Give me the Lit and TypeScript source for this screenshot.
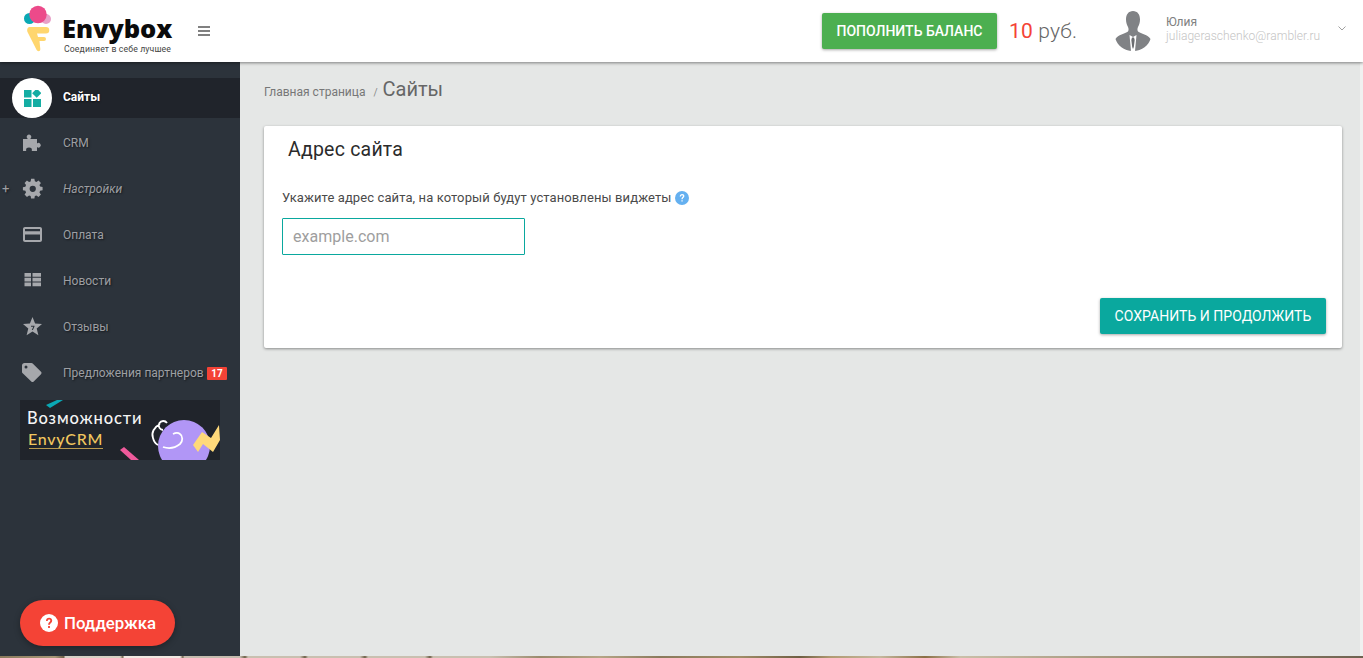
import { LitElement, html, css, svg } from "lit";
import { customElement } from "lit/decorators.js";

const icons: Record<string, unknown> = {
  crm: svg`<path d="M0 6h4.500v-.4a2.300 2.300 0 1 1 3 0V6H14v4.500a2.300 2.300 0 1 1 0 3.500v4H8.800c.5-2.500-.5-3.500-2.800-3.500S2.700 15.500 3.200 18H0z"/>`,
  gear: svg`<g transform="translate(-.1 .6) scale(.92)"><path fill-rule="evenodd" d="M8.200 0h3.600l.5 2.700 1.700.7 2.300-1.600 2.600 2.600-1.600 2.300.7 1.700 2.700.5v3.600l-2.700.5-.7 1.700 1.600 2.300-2.600 2.600-2.300-1.600-1.700.7-.5 2.600H8.200l-.5-2.600-1.700-.7-2.300 1.600-2.600-2.600 1.600-2.300-.7-1.700-2.700-.5V9l2.700-.5.7-1.700-1.600-2.300 2.600-2.600L6 3.500l1.700-.7zM10 7.400a3.400 3.400 0 1 0 0 6.800 3.400 3.400 0 0 0 0-6.800z" transform="translate(.7 -.8)"/></g>`,
  card: svg`<path fill-rule="evenodd" d="M2 2h15c1.100 0 2 .9 2 2v11c0 1.100-.9 2-2 2H2c-1.100 0-2-.9-2-2V4c0-1.100.9-2 2-2zm0 2v2.300h15V4zm0 5.500V15h15V9.500z"/>`,
  table: svg`<path d="M1.500 2H8v3.700H1.500zM9.500 2H18v3.700H9.500zM1.500 6.800H8v3.700H1.500zM9.500 6.800H18v3.700H9.500zM1.500 11.600H8v3.700H1.500zM9.500 11.600H18v3.700H9.500z"/>`,
  star: svg`<path fill-rule="evenodd" d="M9.500 0l2.600 6.500 6.900.5-5.300 4.400 1.700 6.800-5.900-3.700-5.900 3.700 1.700-6.800L0 7l6.900-.5zM8 8.700v1h2.300L8.800 13h1.100l1.600-3.600v-.7z"/>`,
  tag: svg`<path fill-rule="evenodd" d="M1.500 0h7c.5 0 .9.200 1.200.5l8.300 8.300c.7.700.7 1.700 0 2.400l-7.300 7.300c-.7.700-1.700.7-2.400 0L-.3 10.200c-.4-.4-.7-.8-.7-1.300V2.500C-1 1.100.1 0 1.500 0zM3 2.500a1.500 1.500 0 1 0 0 3 1.500 1.500 0 0 0 0-3z"/>`,
};

const menu = [
  { label: "CRM", icon: "crm" },
  { label: "Настройки", icon: "gear", italic: true, plus: true },
  { label: "Оплата", icon: "card" },
  { label: "Новости", icon: "table" },
  { label: "Отзывы", icon: "star" },
  { label: "Предложения партнеров", icon: "tag", badge: "17" },
];

@customElement("app-root")
export class AppRoot extends LitElement {
  static styles = css`
    :host { display: block; width: 1363px; height: 658px; overflow: hidden; font-family: Roboto, "Liberation Sans", sans-serif; background: #e5e7e6; position: relative; }
    * { box-sizing: border-box; }
    .header { height: 62px; background: #fff; display: flex; align-items: center; box-shadow: 0 1px 3px rgba(0,0,0,.45); position: relative; z-index: 2; }
    .brand { width: 240px; height: 100%; display: flex; align-items: center; flex: none; }
    .cone { width: 30px; height: 48px; margin: 0 0 0 23px; align-self: flex-start; margin-top: 5px; flex: none; display: block; }
    .wordmark { margin-left: 9px; display: flex; flex-direction: column; width: 113px; padding-top: 8px; }
    .word { font: 800 25.500px/22px "Open Sans", Lato, sans-serif; color: #0b0b0b; letter-spacing: -.1px; }
    .sub { font: 400 8.700px/10px Roboto, sans-serif; color: #444; letter-spacing: .13px; margin: 5px 0 0 2px; white-space: nowrap; }
    .burger { width: 12px; height: 10px; margin-left: 23px; border-top: 2px solid #808080; border-bottom: 2px solid #808080; position: relative; flex: none; }
    .burger::after { content: ""; position: absolute; left: 0; right: 0; top: 2px; height: 2px; background: #808080; }
    .right { margin-left: auto; display: flex; align-items: center; height: 100%; }
    .topup { width: 175px; height: 36px; background: #4caf50; color: #fff; font-size: 14px; font-weight: 500; border-radius: 2px; display: flex; align-items: center; justify-content: center; box-shadow: 0 1px 3px rgba(0,0,0,.35); }
    .balance { margin-left: 12px; width: 106px; font-size: 21px; font-weight: 300; color: #666; white-space: nowrap; letter-spacing: .2px; }
    .balance b { font-weight: 400; color: #f44336; }
    .avatar { width: 36px; height: 40px; flex: none; display: block; }
    .user { margin-left: 15px; width: 172px; display: flex; flex-direction: column; font-size: 12px; line-height: 14px; margin-top: -4px; }
    .user .name { color: #808080; }
    .user .mail { color: #c4c4c4; font-weight: 300; letter-spacing: .05px; }
    .chev { width: 8px; height: 6px; margin: -6px 17px 0 0; flex: none; display: block; }

    .body { display: flex; height: 594px; }
    .side { width: 240px; flex: none; background: #2c333b; display: flex; flex-direction: column; padding-top: 16px; position: relative; }
    .active { height: 40px; background: #20242b; display: flex; align-items: center; position: relative; }
    .circle { width: 40px; height: 40px; border-radius: 50%; background: #fff; margin-left: 12px; display: flex; align-items: center; justify-content: center; flex: none; }
    .active span { margin: -2px 0 0 11px; color: #fff; font-size: 12px; font-weight: 700; text-shadow: 0 1px 2px rgba(0,0,0,.6); }
    .list { display: flex; flex-direction: column; padding-top: 2px; }
    .item { height: 46px; display: flex; align-items: center; position: relative; padding-left: 23px; color: #9d9fa3; font-size: 12px; text-shadow: 1px 1px 2px rgba(0,0,0,.55); white-space: nowrap; }
    .item svg { width: 20px; height: 20px; fill: #a6a8ac; flex: none; overflow: visible; }
    .item .lbl { margin-left: 20px; }
    .item.it .lbl { font-style: italic; }
    .plus { position: absolute; left: 2px; font-size: 13px; color: #9d9fa3; top: 15px; }
    .badge { background: #f44336; color: #fff; font-size: 10px; font-weight: 700; height: 13px; line-height: 13px; padding: 0 4.500px; margin-left: 3px; border-radius: 1px; text-shadow: none; }
    .promo { width: 200px; height: 60px; margin: 4px 0 0 20px; background: #20242b; position: relative; overflow: hidden; flex: none; }
    .promo .deco { position: absolute; inset: 0; width: 200px; height: 60px; display: block; }
    .promo .t1 { position: absolute; left: 7px; top: 9px; color: #f4f4f4; font: 500 16.500px/19px Lato, Roboto, sans-serif; letter-spacing: .9px; }
    .promo .t2 { position: absolute; left: 8px; top: 29px; color: #f1c75f; font: 500 16px/19px Lato, Roboto, sans-serif; letter-spacing: .75px; }
    .promo .ul { position: absolute; left: 9px; top: 48px; width: 74px; height: 1px; background: #b99a4f; }
    .support { position: absolute; left: 20px; top: 538px; width: 155px; height: 46px; border-radius: 23px; background: #f44336; color: #fff; display: flex; align-items: center; padding: 0 0 1px 20px; font-size: 16.800px; font-weight: 500; box-shadow: 0 2px 6px rgba(0,0,0,.3); }
    .support svg { width: 18px; height: 18px; margin-right: 6px; flex: none; display: block; }

    .main { flex: 1; min-width: 0; padding: 15px 21px 0 24px; }
    .crumbs { display: flex; align-items: baseline; height: 25px; color: #777; white-space: nowrap; }
    .crumbs .c1 { font-size: 12px; }
    .crumbs .sep { font-size: 10px; margin: 0 5px 0 8px; color: #888; }
    .crumbs .c2 { font-size: 20px; color: #666; font-weight: 400; }
    .card { margin-top: 24px; height: 222px; background: #fff; border-radius: 2px; box-shadow: 0 1px 3px rgba(0,0,0,.4); padding: 0 16px 0 18px; display: flex; flex-direction: column; }
    .card h2 { margin: 10px 0 0 6px; font-size: 19.500px; line-height: 27px; font-weight: 400; color: #2b2b2b; letter-spacing: .22px; }
    .field-label { margin-top: 27px; display: flex; align-items: center; font-size: 13px; line-height: 16px; color: #4a4a4a; letter-spacing: .1px; }
    .help { width: 14px; height: 14px; margin-left: 3px; display: block; flex: none; }
    .input { margin-top: 12px; width: 243px; height: 37px; border: 1px solid #0aa89e; border-radius: 1px; padding-left: 10px; display: flex; align-items: center; font-size: 16px; color: #9e9e9e; letter-spacing: .02px; }
    .actions { margin-top: 43px; display: flex; justify-content: flex-end; }
    .save { width: 226px; height: 36px; background: #0aa89e; color: #fff; font-size: 14px; font-weight: 400; letter-spacing: .03px; border-radius: 2px; display: flex; align-items: center; justify-content: center; box-shadow: 0 1px 3px rgba(0,0,0,.35); white-space: nowrap; }
    .stripe { height: 2px; background: linear-gradient(90deg, #8a7a5c 0, #a89878 55px, #6d6048 64px, #d5d0c6 65px, #d8d2c4 120px, #6d6048 123px, #f1e9e2 124px, #f1e9e2 180px, #6d6048 183px, #c5bcae 184px, #c5bcae 240px, #6d6048 245px, #c9c0b0 248px, #c9c0b0 300px, #6d6048 305px, #c9c0b0 308px, #c9c0b0 360px, #6d6048 365px, #c9c0b0 368px, #c9c0b0 425px, #6d6048 430px, #c9c0b0 433px, #c9c0b0 490px, #9a8a6c 540px, #b5a586 600px, #8a7a5c 660px, #a08d68 740px, #6e5e42 800px, #b09a72 830px, #c5b89e 880px, #8a6f45 925px, #cabfa8 960px, #a89a80 1100px, #8c7f66 1250px, #6e6250 1363px); position: relative; z-index: 3; }
    .rail { position: absolute; right: 0; top: 62px; bottom: 2px; width: 3px; background: #f0f1f0; }
  `;

  render() {
    return html`
      <header class="header">
        <div class="brand">
          <svg class="cone" viewBox="0 0 30 48">
            <circle cx="6.500" cy="13.500" r="5.500" fill="#0aa8b4"/>
            <circle cx="23" cy="14" r="5" fill="#e8a0c8"/>
            <circle cx="15" cy="9.500" r="8.700" fill="#ec4a8a"/>
            <path d="M6.500 22H23a3 3 0 0 1 0 6.500H14l1 3.500h6a2 2 0 0 1 0 4h-4.500l.8 8c.2 2.500-2.800 3-3.800.8L4.500 27c-.8-2 0-5 2-5z" fill="#ffd66e"/>
          </svg>
          <div class="wordmark">
            <div class="word">Envybox</div>
            <div class="sub">Соединяет в себе лучшее</div>
          </div>
          <div class="burger"></div>
        </div>
        <div class="right">
          <div class="topup">ПОПОЛНИТЬ БАЛАНС</div>
          <div class="balance"><b>10</b> руб.</div>
          <svg class="avatar" viewBox="0 0 36 40">
            <path d="M18 0c4.500 0 7 3.500 7 8.500 0 3-1 5.500-2 7.500-.7 1.500-.8 3.500 0 4.500 3 2.500 10 3 12.500 7.500-2 6-8 12-17.500 12S2.500 34 .5 28c2.500-4.500 9.500-5 12.500-7.500.8-1 .7-3 0-4.500-1-2-2-4.500-2-7.500C11 3.500 13.500 0 18 0z" fill="#808285"/>
            <path d="M14.500 24l3.500 2 3.500-2-1.500 16h-4z" fill="#fff"/>
            <path d="M17 26.500h2l.7 2.500-.9 7-.8 2-.8-2-.9-7z" fill="#6b6d70"/>
          </svg>
          <div class="user">
            <span class="name">Юлия</span>
            <span class="mail">juliageraschenko@rambler.ru</span>
          </div>
          <svg class="chev" viewBox="0 0 8 6"><path d="M.5 1.500l3.500 3.500 3.500-3.500" fill="none" stroke="#a0a0a0" stroke-width="1"/></svg>
        </div>
      </header>
      <div class="body">
        <aside class="side">
          <div class="active">
            <div class="circle">
              <svg width="17" height="17" viewBox="0 0 17 17" fill="#14ada3">
                <rect x="0" y="0" width="7.500" height="7.500"/>
                <rect x="8.800" y="0" width="6.500" height="6.500" transform="rotate(45 12.500 4)"/>
                <rect x="0" y="9" width="7.500" height="8"/>
                <rect x="9" y="9" width="8" height="8"/>
              </svg>
            </div>
            <span>Сайты</span>
          </div>
          <nav class="list">
            ${menu.map(
              (m) => html`
                <div class="item ${m.italic ? "it" : ""}">
                  ${m.plus ? html`<span class="plus">+</span>` : ""}
                  <svg viewBox="0 0 20 20">${icons[m.icon]}</svg>
                  <span class="lbl">${m.label}</span>
                  ${m.badge ? html`<span class="badge">${m.badge}</span>` : ""}
                </div>
              `
            )}
          </nav>
          <div class="promo">
            <svg class="deco" viewBox="0 0 200 60">
              <path d="M26 5l11-5h6L30 8z" fill="#0aa8b4"/>
              <path d="M100 50l4-3 15 13h-8z" fill="#ef5a9b"/>
              <circle cx="164" cy="46" r="26" fill="#b196f6"/>
              <path d="M173 45l9-13 9 6 8-13 1 15-7 12-10-8-5 8z" fill="#ffd97a"/>
              <path d="M147 23a4.500 4.500 0 1 0-4 7M140 24c-6 3-9 9-7 14 1 4 3 6 5 7M143 47c6 2 12 1 17-3 3-3 3-8 0-10-2-1.500-5-1-7 0" fill="none" stroke="#fff" stroke-width="1.800"/>
            </svg>
            <div class="t1">Возможности</div>
            <div class="t2">EnvyCRM</div>
            <div class="ul"></div>
          </div>
          <div class="support">
            <svg viewBox="0 0 18 18">
              <circle cx="9" cy="9" r="9" fill="#fff"/>
              <path d="M6 7c0-2 1.300-3.200 3.100-3.200S12.200 5 12.200 6.800c0 2.200-2.300 2.400-2.300 4H8.100c0-2.500 2.200-2.800 2.200-4.100 0-.7-.5-1.200-1.200-1.200-.8 0-1.300.5-1.400 1.500zM8.100 12h1.800v1.900H8.100z" fill="#f44336"/>
            </svg>
            Поддержка
          </div>
        </aside>
        <main class="main">
          <div class="crumbs">
            <span class="c1">Главная страница</span>
            <span class="sep">/</span>
            <span class="c2">Сайты</span>
          </div>
          <section class="card">
            <h2>Адрес сайта</h2>
            <div class="field-label">
              Укажите адрес сайта, на который будут установлены виджеты
              <svg class="help" viewBox="0 0 14 14">
                <circle cx="7" cy="7" r="7" fill="#64b0f0"/>
                <path d="M4.700 5.400C4.800 3.900 5.700 3 7.100 3s2.300.9 2.300 2.100c0 1.700-1.700 1.800-1.700 3.200H6.400c0-2 1.600-2.100 1.600-3.200 0-.5-.4-.9-.9-.9-.6 0-1 .4-1.100 1.200zM6.400 9.200h1.300v1.400H6.400z" fill="#fff"/>
              </svg>
            </div>
            <div class="input">example.com</div>
            <div class="actions"><div class="save">СОХРАНИТЬ И ПРОДОЛЖИТЬ</div></div>
          </section>
        </main>
      </div>
      <div class="rail"></div>
      <div class="stripe"></div>
    `;
  }
}
